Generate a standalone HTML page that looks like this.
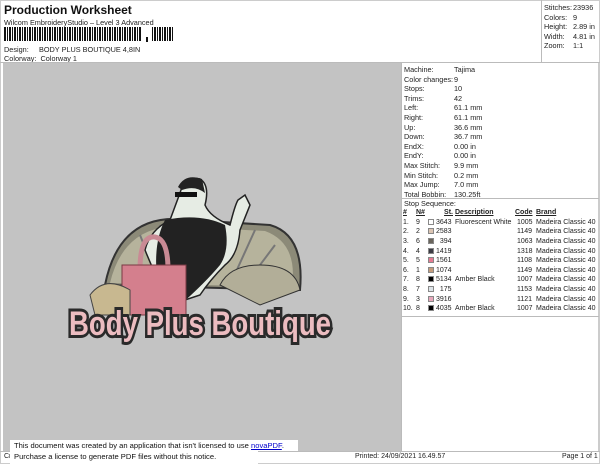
<!DOCTYPE html>
<html><head><meta charset="utf-8"><style>
*{margin:0;padding:0;box-sizing:border-box}
body{width:600px;height:464px;background:#fff;font-family:"Liberation Sans",Arial,sans-serif;color:#222;position:relative;overflow:hidden;font-size:7.5px}
.a{position:absolute;white-space:nowrap}
.gray{position:absolute;left:3px;top:63px;width:399px;height:388px;background:#c3c3c3}
.rp .a{font-size:7.3px}
table{border-collapse:collapse;font-size:7px}
td{padding:0;height:9.6px;white-space:nowrap}
.sw{display:inline-block;width:6px;height:6px;border:1px solid #888;vertical-align:-1px}
</style></head><body>
<div class="a" style="left:0;top:0;width:600px;height:464px;border:1px solid #ccc"></div>
<div class="a" style="left:4px;top:3px;font-size:12px;font-weight:bold;color:#111">Production Worksheet</div>
<div class="a" style="left:4px;top:18px;font-size:7.3px">Wilcom EmbroideryStudio – Level 3 Advanced</div>
<svg class="a" style="left:4px;top:27px" width="170" height="16">
<g fill="#111">
<rect x="0" y="0" width="138" height="14" fill="url(#bc)"/>
<rect x="142" y="10" width="2" height="5"/>
<rect x="148" y="0" width="22" height="14" fill="url(#bc)"/>
</g>
<defs><pattern id="bc" width="5" height="14" patternUnits="userSpaceOnUse"><rect x="0" width="2" height="14" fill="#111"/><rect x="3" width="1" height="14" fill="#111"/></pattern></defs>
</svg>
<div class="a" style="left:4px;top:45px;font-size:7.3px">Design:</div>
<div class="a" style="left:39px;top:45px;font-size:7.3px">BODY PLUS BOUTIQUE 4,8IN</div>
<div class="a" style="left:4px;top:54px;font-size:7.3px">Colorway:&nbsp; Colorway 1</div>
<div class="a" style="left:541px;top:0;width:1px;height:63px;background:#bbb"></div>
<div class="a" style="left:0;top:62px;width:600px;height:1px;background:#bbb"></div>
<div class="a" style="left:544px;top:3px;line-height:9.6px;font-size:7.3px">Stitches:<br>Colors:<br>Height:<br>Width:<br>Zoom:</div>
<div class="a" style="left:573px;top:3px;line-height:9.6px;font-size:7.3px">23936<br>9<br>2.89 in<br>4.81 in<br>1:1</div>
<div class="gray"></div>
<svg class="a" style="left:60px;top:165px" width="280" height="180" viewBox="0 0 280 180">
<path d="M45 120 Q60 45 130 55 L210 60 Q245 70 240 125 Z" fill="#8c8a78" stroke="#333" stroke-width="2"/>
<path d="M50 118 Q65 55 130 62 L205 66 Q238 78 232 122 Z" fill="#b6b39c"/>
<path d="M80 70 L100 120 M100 60 L110 120 M195 65 L170 120 M215 80 L185 120" stroke="#777" stroke-width="2"/>
<path d="M160 120 Q170 100 200 100 Q235 100 240 125 L200 140 Z" fill="#b2ae98" stroke="#333"/>
<path d="M120 28 Q125 10 140 14 Q150 20 145 40 Q150 52 170 60 Q175 40 178 35 L185 30 L190 40 L180 65 Q178 90 165 100 Q150 115 140 130 L110 140 Q95 110 85 85 Q90 65 110 55 Z" fill="#e6ece4" stroke="#222" stroke-width="1.5"/>
<path d="M105 55 Q140 48 165 60 Q170 85 160 100 Q145 118 120 140 L98 120 Q92 80 105 55 Z" fill="#222"/>
<path d="M118 22 Q125 8 142 14 L145 28 Q135 20 122 25 Z" fill="#222"/>
<rect x="115" y="27" width="22" height="5" fill="#111"/>
<path d="M80 105 Q80 70 95 72 Q108 74 108 105" fill="none" stroke="#c98a94" stroke-width="5"/>
<rect x="62" y="100" width="64" height="50" fill="#d47f8d" stroke="#7a3a44"/>
<path d="M30 130 Q45 110 70 125 L70 150 L35 150 Z" fill="#c8b890" stroke="#444"/>
<text x="140" y="170" text-anchor="middle" font-family="Liberation Sans,sans-serif" font-weight="bold" font-size="34" fill="#ecbcc0" stroke="#2a2a2a" stroke-width="6" paint-order="stroke" textLength="262" lengthAdjust="spacingAndGlyphs">Body Plus Boutique</text>
</svg>
<div class="a" style="left:401px;top:63px;width:1px;height:388px;background:#bbb"></div>
<div class="a" style="left:598px;top:63px;width:1px;height:388px;background:#ccc"></div>
<div class="rp">
<div class="a" style="left:404px;top:65px;line-height:9.6px">Machine:<br>Color changes:<br>Stops:<br>Trims:<br>Left:<br>Right:<br>Up:<br>Down:<br>EndX:<br>EndY:<br>Max Stitch:<br>Min Stitch:<br>Max Jump:<br>Total Bobbin:</div>
<div class="a" style="left:454px;top:65px;line-height:9.6px">Tajima<br>9<br>10<br>42<br>61.1 mm<br>61.1 mm<br>36.6 mm<br>36.7 mm<br>0.00 in<br>0.00 in<br>9.9 mm<br>0.2 mm<br>7.0 mm<br>130.25ft</div>
</div>
<div class="a" style="left:401px;top:198px;width:198px;height:1px;background:#bbb"></div>
<div class="a" style="left:404px;top:199px;font-size:7.3px">Stop Sequence:</div>
<table class="a" style="left:403px;top:208px">
<tr style="font-weight:bold;text-decoration:underline"><td style="width:13px">#</td><td style="width:12px">N#</td><td style="width:27px;text-align:right;padding-right:2px">St.</td><td style="width:60px">Description</td><td style="width:21px">Code</td><td>Brand</td></tr>
<tr><td>1.</td><td>9</td><td><span class="sw" style="background:#fff"></span> 3643</td><td>Fluorescent White</td><td>&nbsp;1005</td><td>Madeira Classic 40</td></tr>
<tr><td>2.</td><td>2</td><td><span class="sw" style="background:#dcc5b3"></span> 2583</td><td></td><td>&nbsp;1149</td><td>Madeira Classic 40</td></tr>
<tr><td>3.</td><td>6</td><td><span class="sw" style="background:#6a655c"></span> &nbsp;&nbsp;394</td><td></td><td>&nbsp;1063</td><td>Madeira Classic 40</td></tr>
<tr><td>4.</td><td>4</td><td><span class="sw" style="background:#3c3c44"></span> 1419</td><td></td><td>&nbsp;1318</td><td>Madeira Classic 40</td></tr>
<tr><td>5.</td><td>5</td><td><span class="sw" style="background:#e57b92"></span> 1561</td><td></td><td>&nbsp;1108</td><td>Madeira Classic 40</td></tr>
<tr><td>6.</td><td>1</td><td><span class="sw" style="background:#c49c7c"></span> 1074</td><td></td><td>&nbsp;1149</td><td>Madeira Classic 40</td></tr>
<tr><td>7.</td><td>8</td><td><span class="sw" style="background:#000"></span> 5134</td><td>Amber Black</td><td>&nbsp;1007</td><td>Madeira Classic 40</td></tr>
<tr><td>8.</td><td>7</td><td><span class="sw" style="background:#dde4e8"></span> &nbsp;&nbsp;175</td><td></td><td>&nbsp;1153</td><td>Madeira Classic 40</td></tr>
<tr><td>9.</td><td>3</td><td><span class="sw" style="background:#e8a8bc"></span> 3916</td><td></td><td>&nbsp;1121</td><td>Madeira Classic 40</td></tr>
<tr><td>10.</td><td>8</td><td><span class="sw" style="background:#000"></span> 4035</td><td>Amber Black</td><td>&nbsp;1007</td><td>Madeira Classic 40</td></tr>
</table>
<div class="a" style="left:401px;top:316px;width:198px;height:1px;background:#bbb"></div>
<div class="a" style="left:0;top:451px;width:600px;height:1px;background:#bbb"></div>
<div class="a" style="left:4px;top:453px;font-size:7px">Cr</div>
<div class="a" style="left:355px;top:453px;font-size:7px">Printed: 24/09/2021 16.49.57</div>
<div class="a" style="left:562px;top:453px;font-size:7px">Page 1 of 1</div>
<div class="a" style="left:10px;top:440px;width:288px;height:11px;background:#fff"></div>
<div class="a" style="left:10px;top:451px;width:248px;height:13px;background:#fff"></div>
<div class="a" style="left:14px;top:441px;font-size:7.6px;line-height:10.5px;color:#111">This document was created by an application that isn't licensed to use <span style="color:#00c;text-decoration:underline">novaPDF</span>.<br>Purchase a license to generate PDF files without this notice.</div>
</body></html>
